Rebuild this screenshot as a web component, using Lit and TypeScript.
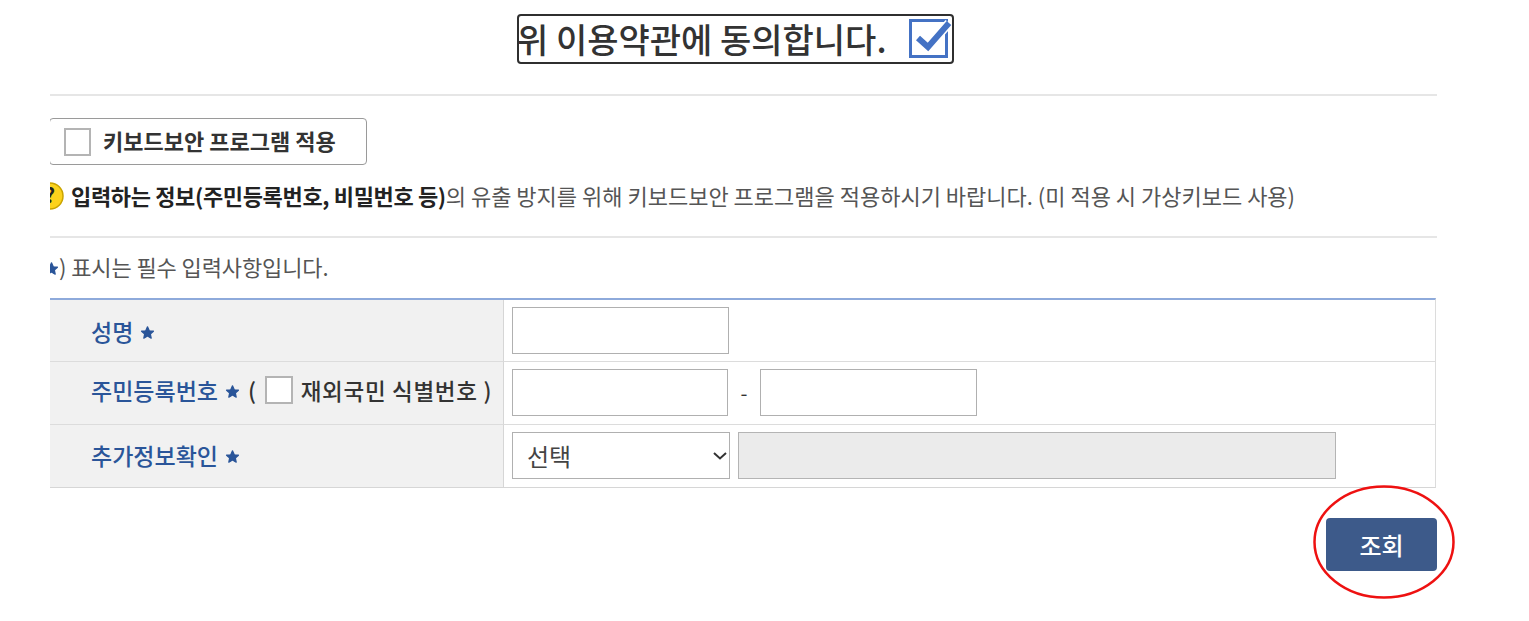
import {LitElement, html, css} from 'lit';
import {customElement} from 'lit/decorators.js';

@customElement('app-root')
export class AppRoot extends LitElement {
    static override styles = css`
        :host {
            display: block;
            position: relative;
            height: 621px;
            overflow: hidden;
            background: #fff;
            color: #333;
            font-family: "Noto Sans CJK KR", "Noto Sans", sans-serif;
        }

        .agree-row {
            display: flex;
            justify-content: center;
            padding: 14px 0 0 0;
            width: 1471px;
        }

        .agree {
            box-sizing: border-box;
            width: 437px;
            height: 50px;
            display: flex;
            align-items: center;
            justify-content: space-between;
            border: 2px solid #2f2f2f;
            border-radius: 4px;
            font-size: 34px;
            font-weight: 500;
            line-height: 46px;
            color: #333;
            white-space: nowrap;
        }

        .agree span {
            margin-left: -2px;
        }

        .agree svg {
            display: block;
        }

        .page {
            width: 1387px;
            margin: 30px 0 0 50px;
            overflow: hidden;
        }

        .rule {
            height: 2px;
            background: #e6e6e6;
        }

        .security {
            box-sizing: border-box;
            width: 318px;
            height: 47px;
            margin: 22px 0 0 -1px;
            display: flex;
            align-items: center;
            gap: 12px;
            padding-left: 14px;
            border: 1px solid #9a9a9a;
            border-radius: 4px;
            font-size: 22px;
            font-weight: 700;
            color: #333;
        }

        .security .text {
            margin-bottom: 4px;
        }

        .box {
            box-sizing: border-box;
            flex: none;
            width: 28px;
            height: 28px;
            background: #fff;
            border: 2px solid #b4b4b4;
        }

        .security .box {
            width: 27px;
        }

        .info {
            display: flex;
            align-items: center;
            height: 28px;
            margin: 17px 0 26px -14px;
            font-size: 22px;
            color: #555;
            white-space: nowrap;
        }

        .info svg {
            flex: none;
            margin-right: 7px;
        }

        .info .text {
            margin-bottom: 2px;
        }

        .info b {
            color: #222;
            font-weight: 700;
            letter-spacing: -0.35px;
        }

        .note {
            display: flex;
            align-items: center;
            height: 28px;
            margin: 16px 0 16px -6px;
            font-size: 22px;
            letter-spacing: -0.1px;
            color: #555;
        }

        .note svg {
            flex: none;
        }

        .note .text {
            margin-bottom: 4px;
        }

        .form {
            box-sizing: border-box;
            width: 1386px;
            display: grid;
            grid-template-columns: 454px 1fr;
            grid-template-rows: 62px 63px 62px;
            border-top: 2px solid #8eaadb;
            border-right: 1px solid #dcdcdc;
            border-bottom: 1px solid #d6d6d6;
        }

        .label {
            display: flex;
            align-items: center;
            gap: 7px;
            padding-left: 41px;
            background: #f1f1f1;
            border-right: 1px solid #d6d6d6;
            border-bottom: 1px solid #dcdcdc;
            font-size: 23px;
            font-weight: 500;
            color: #2a5599;
            white-space: nowrap;
        }

        .label svg {
            margin-top: 3px;
        }

        .label.id-row {
            padding-bottom: 6px;
        }

        .label.last {
            padding-bottom: 2px;
        }

        .label.last, .field.last {
            border-bottom: none;
        }

        .label .extra {
            display: flex;
            align-items: center;
            gap: 8px;
            margin-left: 1px;
            color: #333;
            font-size: 22.5px;
            letter-spacing: 0.7px;
        }

        .field {
            display: flex;
            align-items: center;
            padding-left: 8px;
            border-bottom: 1px solid #dcdcdc;
        }

        .field.up {
            padding-bottom: 2px;
        }

        .input {
            box-sizing: border-box;
            width: 216px;
            height: 47px;
            border: 1px solid #b0b0b0;
            background: #fff;
        }

        .input.wide {
            width: 217px;
        }

        .dash {
            width: 32px;
            text-align: center;
            font-size: 20px;
            color: #333;
        }

        .select-wrap {
            position: relative;
            height: 47px;
        }

        .select-wrap svg {
            position: absolute;
            right: 3px;
            top: 20px;
            pointer-events: none;
        }

        .select {
            appearance: none;
            box-sizing: border-box;
            display: block;
            width: 218px;
            height: 47px;
            padding: 0 0 0 14px;
            border: 1px solid #b0b0b0;
            background: #fff;
            font-family: inherit;
            font-size: 24px;
            color: #444;
            border-radius: 0;
        }

        .readonly {
            box-sizing: border-box;
            width: 598px;
            height: 47px;
            margin-left: 8px;
            border: 1px solid #b4b4b4;
            background: #ebebeb;
        }

        .actions {
            display: flex;
            justify-content: flex-end;
            padding-top: 30px;
        }

        .search {
            width: 111px;
            height: 53px;
            border: none;
            border-radius: 4px;
            background: #3d5a8a;
            color: #fff;
            font-family: inherit;
            font-size: 24px;
            font-weight: 500;
        }

        .circle {
            position: absolute;
            left: 1313px;
            top: 485px;
        }
    `;

    private star() {
        return html`<svg width="15" height="15" viewBox="0 0 24 24"><path fill="#2a5599" stroke="#2a5599" stroke-width="2" stroke-linejoin="round" d="M12 3l2.8 6.2 6.7.7-5 4.5 1.4 6.6L12 17.6 6.1 21l1.4-6.6-5-4.5 6.7-.7z"/></svg>`;
    }

    override render() {
        return html`
            <div class="agree-row">
                <div class="agree">
                    <span>위 이용약관에 동의합니다.</span>
                    <svg width="44" height="44" viewBox="0 0 44 44">
                        <rect x="2.5" y="3.5" width="36" height="36" fill="#fff" stroke="#4472c4" stroke-width="3"/>
                        <path d="M10 21l10 9L41 6" fill="none" stroke="#fff" stroke-width="9"/>
                        <path d="M10 21l10 9L41 6" fill="none" stroke="#4472c4" stroke-width="6"/>
                    </svg>
                </div>
            </div>
            <div class="page">
                <div class="rule"></div>
                <div class="security">
                    <span class="box"></span>
                    <span class="text">키보드보안 프로그램 적용</span>
                </div>
                <div class="info">
                    <svg width="28" height="30" viewBox="0 0 28 30">
                        <circle cx="14" cy="15" r="13" fill="#fcd21c" stroke="#caa400" stroke-width="1.5"/>
                        <text x="14" y="22" text-anchor="middle" font-size="20" font-weight="700" fill="#222">?</text>
                    </svg>
                    <span class="text"><b>입력하는 정보(주민등록번호, 비밀번호 등)</b>의 유출 방지를 위해 키보드보안 프로그램을 적용하시기 바랍니다. (미 적용 시 가상키보드 사용)</span>
                </div>
                <div class="rule"></div>
                <div class="note">
                    ${this.star()}<span class="text">) 표시는 필수 입력사항입니다.</span>
                </div>
                <div class="form">
                    <div class="label">성명 ${this.star()}</div>
                    <div class="field"><div class="input wide"></div></div>
                    <div class="label id-row">
                        주민등록번호 ${this.star()}
                        <span class="extra">( <span class="box"></span> 재외국민 식별번호 )</span>
                    </div>
                    <div class="field up">
                        <div class="input"></div>
                        <div class="dash">-</div>
                        <div class="input wide"></div>
                    </div>
                    <div class="label last">추가정보확인 ${this.star()}</div>
                    <div class="field last up">
                        <div class="select-wrap">
                            <select class="select"><option>선택</option></select>
                            <svg width="14" height="8" viewBox="0 0 14 8"><path d="M1 1l6 5.5L13 1" fill="none" stroke="#333" stroke-width="2"/></svg>
                        </div>
                        <div class="readonly"></div>
                    </div>
                </div>
                <div class="actions">
                    <button class="search">조회</button>
                </div>
            </div>
            <svg class="circle" width="142" height="114" viewBox="0 0 142 114">
                <ellipse cx="71" cy="57" rx="69.5" ry="55.5" fill="none" stroke="#ee1111" stroke-width="2.5"/>
            </svg>
        `;
    }
}
